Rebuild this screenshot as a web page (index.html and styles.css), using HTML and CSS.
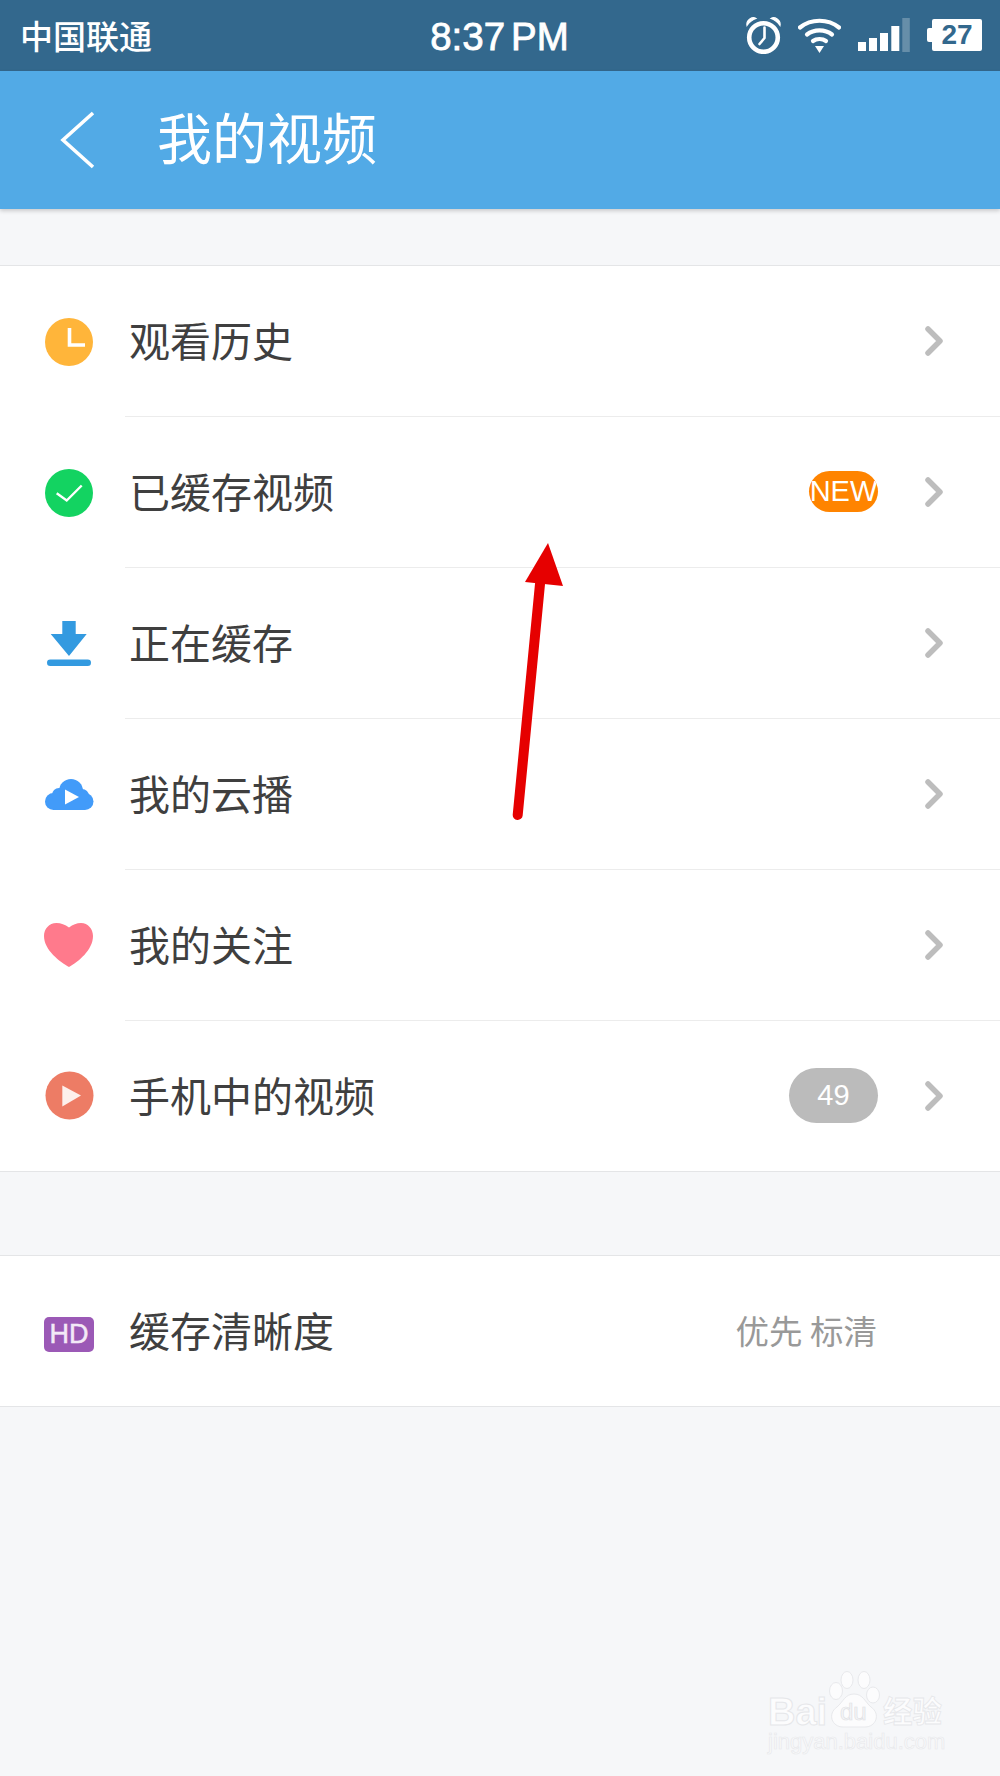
FILE: index.html
```html
<!DOCTYPE html>
<html lang="zh-CN">
<head>
<meta charset="utf-8">
<title>我的视频</title>
<link rel="stylesheet" href="styles.css">
</head>
<body>
<div class="phone">
  <header class="status">
    <span class="carrier">中国联通</span>
    <span class="time">8:37<span class="ampm">PM</span></span>
    <div class="status-icons">
      <svg class="alarm" width="35" height="37" viewBox="0 0 35 37"><circle cx="17.500" cy="20.500" r="14.300" fill="none" stroke="#fff" stroke-width="4.600"/><path d="M18.500 10.500v10.500l-5 6" fill="none" stroke="#fff" stroke-width="2.600" stroke-linecap="round" stroke-linejoin="round"/><path d="M1 8.500C0 3 6.500 -1 10 1.500C6.500 2.500 3.500 5 1 8.500ZM34 8.500C35 3 28.500 -1 25 1.500C28.500 2.500 31.500 5 34 8.500Z" fill="#fff" stroke="#fff" stroke-width="1.200"/></svg>
      <svg class="wifi" width="43" height="35" viewBox="0 0 43 35"><path d="M2 9.500C13 0.500 30 0.500 41 9.500" fill="none" stroke="#fff" stroke-width="4.200" stroke-linecap="round"/><path d="M9 16.500C16 11 27 11 34 16.500" fill="none" stroke="#fff" stroke-width="4.200" stroke-linecap="round"/><path d="M15 23C18.500 20.300 24.500 20.300 28 23" fill="none" stroke="#fff" stroke-width="4.200" stroke-linecap="round"/><path d="M17 28H26L21.500 35Z" fill="#fff"/></svg>
      <svg class="signal" width="52" height="34" viewBox="0 0 52 34"><rect x="0" y="24" width="8" height="9" fill="#fff"/><rect x="11" y="20" width="8" height="13" fill="#fff"/><rect x="22" y="15" width="8" height="18" fill="#fff"/><rect x="33.300" y="8" width="8" height="25" fill="#fff"/><rect x="44.300" y="0" width="7.500" height="34" fill="#fff" fill-opacity=".25"/></svg>
      <div class="battery"><span class="battery-nub"></span><span class="battery-body">27</span></div>
    </div>
  </header>

  <nav class="navbar">
    <svg class="back" width="36" height="60" viewBox="0 0 36 60"><path d="M33 3L3 30L33 57" fill="none" stroke="#fff" stroke-width="3.600"/></svg>
    <h1 class="title">我的视频</h1>
  </nav>

  <section class="group group-first">
    <div class="row">
      <svg class="icon" width="50" height="50" viewBox="0 0 50 50"><circle cx="25" cy="25" r="24" fill="#ffb53a"/><path d="M25.500 11V28H41" fill="none" stroke="#fff" stroke-width="3.600"/></svg>
      <div class="row-body"><span class="label">观看历史</span>
        <svg class="chev" width="18" height="30" viewBox="0 0 18 30"><path d="M3 3L15 15L3 27" fill="none" stroke="#bdbdbd" stroke-width="5.500" stroke-linecap="round" stroke-linejoin="round"/></svg></div>
    </div>
    <div class="row">
      <svg class="icon" width="50" height="50" viewBox="0 0 50 50"><circle cx="25" cy="25" r="24" fill="#13d361"/><path d="M12.700 25.200L22.700 32.500L37.700 17.500" fill="none" stroke="#fff" stroke-width="2.400"/></svg>
      <div class="row-body"><span class="label">已缓存视频</span>
        <span class="badge badge-new">NEW</span>
        <svg class="chev" width="18" height="30" viewBox="0 0 18 30"><path d="M3 3L15 15L3 27" fill="none" stroke="#bdbdbd" stroke-width="5.500" stroke-linecap="round" stroke-linejoin="round"/></svg></div>
    </div>
    <div class="row">
      <svg class="icon" width="50" height="50" viewBox="0 0 50 50"><path d="M18.300 2H31.700V15H42.700L25 37L6.700 15H18.300Z" fill="#339ae0"/><rect x="3" y="40.500" width="44" height="6.500" rx="3.250" fill="#339ae0"/></svg>
      <div class="row-body"><span class="label">正在缓存</span>
        <svg class="chev" width="18" height="30" viewBox="0 0 18 30"><path d="M3 3L15 15L3 27" fill="none" stroke="#bdbdbd" stroke-width="5.500" stroke-linecap="round" stroke-linejoin="round"/></svg></div>
    </div>
    <div class="row">
      <svg class="icon" width="50" height="50" viewBox="0 0 50 50"><g fill="#429bf9"><circle cx="9.500" cy="31.500" r="8.500"/><circle cx="15" cy="25" r="7"/><circle cx="27" cy="21" r="12"/><circle cx="41" cy="31.500" r="8.500"/><circle cx="38" cy="26" r="7"/><rect x="9" y="26" width="32" height="14"/></g><path d="M21 19.500L35 27L21 34.500Z" fill="#fff"/></svg>
      <div class="row-body"><span class="label">我的云播</span>
        <svg class="chev" width="18" height="30" viewBox="0 0 18 30"><path d="M3 3L15 15L3 27" fill="none" stroke="#bdbdbd" stroke-width="5.500" stroke-linecap="round" stroke-linejoin="round"/></svg></div>
    </div>
    <div class="row">
      <svg class="icon" width="50" height="50" viewBox="0 0 50 50"><path d="M25 6.500C21 3.500 17 2 12.500 2C5 2 0 8 0 15C0 29 16 41 25 46C34 41 49 29 49 15C49 8 44 2 37 2C32.500 2 29 3.500 25 6.500Z" fill="#ff7a8c"/></svg>
      <div class="row-body"><span class="label">我的关注</span>
        <svg class="chev" width="18" height="30" viewBox="0 0 18 30"><path d="M3 3L15 15L3 27" fill="none" stroke="#bdbdbd" stroke-width="5.500" stroke-linecap="round" stroke-linejoin="round"/></svg></div>
    </div>
    <div class="row row-last">
      <svg class="icon" width="50" height="50" viewBox="0 0 50 50"><circle cx="25.500" cy="24.500" r="24" fill="#ed7c65"/><path d="M18.300 14.500L37 24.500L18.300 35.500Z" fill="#fdf0ec"/></svg>
      <div class="row-body"><span class="label">手机中的视频</span>
        <span class="badge badge-count">49</span>
        <svg class="chev" width="18" height="30" viewBox="0 0 18 30"><path d="M3 3L15 15L3 27" fill="none" stroke="#bdbdbd" stroke-width="5.500" stroke-linecap="round" stroke-linejoin="round"/></svg></div>
    </div>
  </section>

  <section class="group group-second">
    <div class="row row-last">
      <span class="icon hd">HD</span>
      <div class="row-body row-body-value"><span class="label">缓存清晰度</span>
        <span class="value">优先 标清</span></div>
    </div>
  </section>

  <svg class="arrow" width="70" height="290" viewBox="0 0 70 290"><path d="M17.700 275L40 44" fill="none" stroke="#e60000" stroke-width="10" stroke-linecap="round"/><path d="M48 3L63 46L25 42Z" fill="#e60000"/></svg>

  <svg class="watermark" width="200" height="110" viewBox="0 0 200 110">
    <g class="wm-shape">
      <ellipse cx="75" cy="39" rx="6.500" ry="8.500"/><ellipse cx="86" cy="28" rx="6" ry="8.500"/><ellipse cx="103" cy="28" rx="6" ry="8.500"/><ellipse cx="112" cy="43" rx="6.500" ry="8"/>
      <path d="M93 42C102 42 104 50 110 55C120 62 115 75 104 75H82C71 75 66 62 76 55C82 50 84 42 93 42Z"/>
    </g>
    <text class="wm-big" x="7" y="73">Bai</text>
    <text class="wm-du" x="79" y="68">du</text>
    <text class="wm-cn" x="122" y="70">经验</text>
    <text class="wm-url" x="7" y="97">jingyan.baidu.com</text>
  </svg>
</div>
</body>
</html>
```

FILE: styles.css
```css
* { box-sizing: border-box; }
html, body { margin: 0; padding: 0; }
body { background: #f6f7f9; font-family: "Noto Sans CJK SC", "Liberation Sans", sans-serif; }
.phone { position: relative; width: 1000px; height: 1776px; overflow: hidden; background: #f6f7f9; }

.status { height: 71px; background: #33688d; display: grid; grid-template-columns: 1fr auto 1fr; align-items: center; padding: 0 18px 0 20px; color: #fff; }
.carrier { font-size: 33px; font-weight: 500; line-height: 1; margin-top: -1px; }
.time { font-family: "Liberation Sans", Arial, sans-serif; font-size: 38.500px; line-height: 1; -webkit-text-stroke: .8px #fff; margin: 3px 0 0 -3px; }
.ampm { margin-left: 6px; }
.status-icons { display: flex; justify-content: flex-end; align-items: center; gap: 17px; margin-top: -1px; }
.battery { display: flex; align-items: center; }
.battery-nub { width: 5px; height: 14px; background: #fff; border-radius: 2px 0 0 2px; }
.battery-body { width: 50px; height: 32px; background: #fff; border-radius: 2px; color: #33688d; font-family: "Liberation Sans", Arial, sans-serif; font-weight: 700; font-size: 28px; line-height: 32px; text-align: center; }

.navbar { height: 138px; background: #52aae6; display: flex; align-items: center; padding-left: 60px; box-shadow: 0 2px 4px rgba(0, 0, 0, .18); position: relative; }
.back { flex: none; }
.title { margin: -9px 0 0 61px; color: #fff; font-size: 55px; font-weight: 400; line-height: 1; }

.group { background: #fff; border-top: 1px solid #e4e5e7; border-bottom: 1px solid #e4e5e7; }
.group-first { margin-top: 56px; }
.group-second { margin-top: 83px; }
.row { height: 151px; display: flex; align-items: stretch; padding-left: 44px; }
.row-last { height: 150px; }
.icon { flex: none; align-self: center; }
.row-body { flex: 1; margin-left: 31px; padding: 0 57px 0 4px; display: flex; align-items: center; border-bottom: 1px solid #ececec; }
.row-last .row-body { border-bottom: none; }
.row-body-value { padding-right: 123px; }
.label { flex: 1; font-size: 41px; line-height: 1; color: #3f3f3f; margin-top: -4px; }
.chev { flex: none; margin-left: 47px; }

.badge { flex: none; margin-top: -2px; font-family: "Liberation Sans", Arial, sans-serif; color: #fff; font-size: 29px; text-align: center; }
.badge-new { width: 69px; height: 41px; line-height: 41px; border-radius: 21px; background: #ff8400; overflow: hidden; }
.badge-count { width: 89px; height: 55px; line-height: 55px; border-radius: 28px; background: #bbbbbb; }
.value { flex: none; font-size: 33.500px; line-height: 1; color: #999; margin-top: -2px; }

.hd { width: 50px; height: 35px; margin-top: 6px; background: #9b59b6; border-radius: 5px; color: #f3e9f7; font-family: "Liberation Sans", Arial, sans-serif; font-size: 27px; line-height: 35px; text-align: center; -webkit-text-stroke: .5px #f3e9f7; }

.arrow { position: absolute; left: 500px; top: 540px; }

.watermark { position: absolute; left: 761px; top: 1652px; }
.wm-shape { fill: #fcfcfd; stroke: #e8e9ec; stroke-width: 1; }
.wm-big { font-family: "Liberation Sans", Arial, sans-serif; font-weight: 700; font-size: 38px; fill: #fcfcfd; stroke: #e6e7ea; stroke-width: 1; }
.wm-du { font-family: "Liberation Sans", Arial, sans-serif; font-size: 24px; fill: #f6f7f9; stroke: #e0e1e4; stroke-width: .7; }
.wm-cn { font-family: "Noto Sans CJK SC", sans-serif; font-weight: 700; font-size: 29.500px; fill: #fcfcfd; stroke: #e6e7ea; stroke-width: .8; }
.wm-url { font-family: "Liberation Sans", Arial, sans-serif; font-size: 22px; fill: #fafafb; stroke: #e8e9ec; stroke-width: .7; }
```
